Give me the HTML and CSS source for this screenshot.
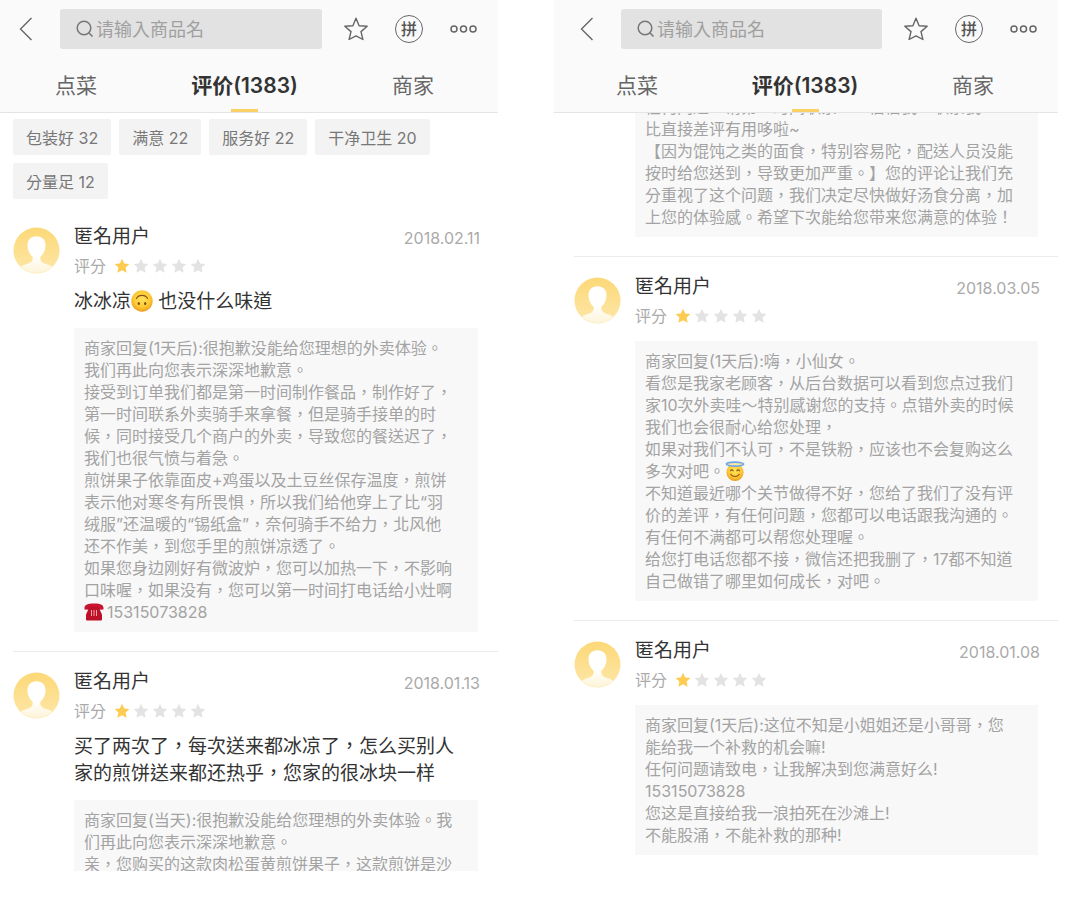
FILE: index.html
```
<!DOCTYPE html>
<html lang="zh-Hant">

<head>
    <meta charset="UTF-8">
    <meta name="viewport" content="width=device-width, initial-scale=1.0">
    <title>评价</title>
    <link rel="stylesheet" href="styles.css">
</head>

<body>
    <!-- shared shapes -->
    <svg class="sprite" aria-hidden="true">
        <defs>
            <linearGradient id="avatar-bg" x1="0" y1="0" x2="0" y2="1">
                <stop offset="0" stop-color="#fcd877" />
                <stop offset="1" stop-color="#fde7a8" />
            </linearGradient>
            <linearGradient id="avatar-body" x1="0" y1="0" x2="0" y2="1">
                <stop offset="0.5" stop-color="#ffffff" />
                <stop offset="1" stop-color="#fdf3d6" />
            </linearGradient>
            <radialGradient id="face" cx="0.5" cy="0.4" r="0.6">
                <stop offset="0" stop-color="#ffe45c" />
                <stop offset="0.65" stop-color="#fdc935" />
                <stop offset="1" stop-color="#ee9a1c" />
            </radialGradient>
            <clipPath id="avatar-clip">
                <circle cx="24" cy="24" r="23" />
            </clipPath>
        </defs>
        <symbol id="back" viewBox="0 0 14 24">
            <path d="M12.5 1L1.5 12L12.5 23" fill="none" stroke="#666" stroke-width="1.4" />
        </symbol>
        <symbol id="search" viewBox="0 0 18 18">
            <circle cx="8" cy="8" r="6.8" fill="none" stroke="#777" stroke-width="1.5" />
            <path d="M12.8 12.8L16.5 16.5" stroke="#777" stroke-width="1.6" />
        </symbol>
        <symbol id="favorite" viewBox="0 0 24 24">
            <path d="M12 1.2L15.1 8.7L23.2 9.3L17 14.6L18.9 22.5L12 18.9L5.1 22.5L7 14.6L0.8 9.3L8.9 8.7Z" fill="none" stroke="#666" stroke-width="1.4" stroke-linejoin="round" />
        </symbol>
        <symbol id="more" viewBox="0 0 27 8">
            <g fill="none" stroke="#666" stroke-width="1.5">
                <circle cx="4" cy="4" r="3" />
                <circle cx="13.5" cy="4" r="3" />
                <circle cx="23" cy="4" r="3" />
            </g>
        </symbol>
        <symbol id="star" viewBox="0 0 16 16">
            <path d="M8 0.8L10.2 5.5L15.4 6.1L11.6 9.6L12.6 14.8L8 12.3L3.4 14.8L4.4 9.6L0.6 6.1L5.8 5.5Z" fill="currentColor" />
        </symbol>
        <symbol id="avatar" viewBox="0 0 48 48">
            <circle cx="24" cy="24" r="23.5" fill="url(#avatar-bg)" />
            <path clip-path="url(#avatar-clip)" d="M24 9.5C18 9.5 14.5 13.5 14.8 19.5C15 24 17 28 20 30.5C20.5 34 19.5 36 15 37.5C10.5 38.8 7.5 40 5 44L10 48H38L43 44C40.5 40 37.5 38.8 33 37.5C28.5 36 27.5 34 28 30.5C31 28 33 24 33.2 19.5C33.5 13.5 30 9.5 24 9.5Z" fill="url(#avatar-body)" />
        </symbol>
        <symbol id="upside-down" viewBox="0 0 22 22">
            <circle cx="11" cy="11" r="10.7" fill="url(#face)" />
            <path d="M5.5 8.5C7.5 4.3 14.5 4.3 16.5 8.5" fill="none" stroke="#8a5210" stroke-width="1.1" stroke-linecap="round" />
            <ellipse cx="7.8" cy="13.5" rx="1.1" ry="1.6" fill="#7a450c" />
            <ellipse cx="14.2" cy="13.5" rx="1.1" ry="1.6" fill="#7a450c" />
        </symbol>
        <symbol id="angel" viewBox="0 0 22 22">
            <circle cx="11" cy="12.5" r="9.4" fill="url(#face)" />
            <ellipse cx="11" cy="3.4" rx="9.5" ry="2.2" fill="#fbe7a0" stroke="#6fa6e8" stroke-width="1.8" />
            <path d="M6 10.8C6.8 9.4 8.2 9.4 9 10.8M13 10.8C13.8 9.4 15.2 9.4 16 10.8M6.3 14.5C8.5 18 13.5 18 15.7 14.5" fill="none" stroke="#8a5210" stroke-width="1.2" stroke-linecap="round" />
        </symbol>
        <symbol id="telephone" viewBox="0 0 20 18">
            <path d="M0.5 6.5C0 2 3 0.6 10 0.6S20 2 19.5 6.5L14.5 6.8L14 4.5H6L5.500 6.8Z" fill="#c8142c" />
            <path d="M5.5 4H14.500L18 11.500V16.500Q18 17.500 17 17.500H3Q2 17.500 2 16.500V11.500Z" fill="#bd1029" />
            <path d="M7.5 7V13M10 7V13M12.5 7V13" stroke="#f3a6a6" stroke-width="1" />
        </symbol>
    </svg>

    <main class="phone">
        <header class="header">
            <div class="toolbar">
                <button class="back" aria-label="返回"><svg width="14" height="24"><use href="#back" /></svg></button>
                <label class="search">
                    <svg width="18" height="18"><use href="#search" /></svg>
                    <input type="search" placeholder="请输入商品名" aria-label="请输入商品名">
                </label>
                <div class="actions">
                    <button aria-label="收藏"><svg width="24" height="24"><use href="#favorite" /></svg></button>
                    <button class="group-buy">拼</button>
                    <button aria-label="更多"><svg width="27" height="8"><use href="#more" /></svg></button>
                </div>
            </div>
            <nav class="tabs">
                <button class="tab">点菜</button>
                <button class="tab active">评价(1383)</button>
                <button class="tab">商家</button>
            </nav>
        </header>

        <section class="content">
            <div class="tags">
                <button class="tag">包装好 32</button>
                <button class="tag">满意 22</button>
                <button class="tag">服务好 22</button>
                <button class="tag">干净卫生 20</button>
                <button class="tag">分量足 12</button>
            </div>

            <article class="review">
                <svg class="avatar"><use href="#avatar" /></svg>
                <div class="review-body">
                    <div class="review-head">
                        <h2 class="user">匿名用户</h2>
                        <time class="date">2018.02.11</time>
                    </div>
                    <div class="rating">
                        <span>评分</span>
                        <div class="stars" role="img" aria-label="1">
                            <svg class="on"><use href="#star" /></svg>
                            <svg><use href="#star" /></svg>
                            <svg><use href="#star" /></svg>
                            <svg><use href="#star" /></svg>
                            <svg><use href="#star" /></svg>
                        </div>
                    </div>
                    <p class="comment">冰冰凉<svg class="emoji"><use href="#upside-down" /></svg> 也没什么味道</p>
                    <p class="reply">
                        商家回复(1天后):很抱歉没能给您理想的外卖体验。<br>
                        我们再此向您表示深深地歉意。<br>
                        接受到订单我们都是第一时间制作餐品，制作好了，<br>
                        第一时间联系外卖骑手来拿餐，但是骑手接单的时<br>
                        候，同时接受几个商户的外卖，导致您的餐送迟了，<br>
                        我们也很气愤与着急。<br>
                        煎饼果子依靠面皮+鸡蛋以及土豆丝保存温度，煎饼<br>
                        表示他对寒冬有所畏惧，所以我们给他穿上了比“羽<br>
                        绒服”还温暖的“锡纸盒”，奈何骑手不给力，北风他<br>
                        还不作美，到您手里的煎饼凉透了。<br>
                        如果您身边刚好有微波炉，您可以加热一下，不影响<br>
                        口味喔，如果没有，您可以第一时间打电话给小灶啊<br>
                        <svg class="emoji small"><use href="#telephone" /></svg>15315073828
                    </p>
                </div>
            </article>

            <article class="review">
                <svg class="avatar"><use href="#avatar" /></svg>
                <div class="review-body">
                    <div class="review-head">
                        <h2 class="user">匿名用户</h2>
                        <time class="date">2018.01.13</time>
                    </div>
                    <div class="rating">
                        <span>评分</span>
                        <div class="stars" role="img" aria-label="1">
                            <svg class="on"><use href="#star" /></svg>
                            <svg><use href="#star" /></svg>
                            <svg><use href="#star" /></svg>
                            <svg><use href="#star" /></svg>
                            <svg><use href="#star" /></svg>
                        </div>
                    </div>
                    <p class="comment">买了两次了，每次送来都冰凉了，怎么买别人<br>家的煎饼送来都还热乎，您家的很冰块一样</p>
                    <p class="reply">
                        商家回复(当天):很抱歉没能给您理想的外卖体验。我<br>
                        们再此向您表示深深地歉意。<br>
                        亲，您购买的这款肉松蛋黄煎饼果子，这款煎饼是沙
                    </p>
                </div>
            </article>
        </section>
    </main>

    <main class="phone wide">
        <header class="header">
            <div class="toolbar">
                <button class="back" aria-label="返回"><svg width="14" height="24"><use href="#back" /></svg></button>
                <label class="search">
                    <svg width="18" height="18"><use href="#search" /></svg>
                    <input type="search" placeholder="请输入商品名" aria-label="请输入商品名">
                </label>
                <div class="actions">
                    <button aria-label="收藏"><svg width="24" height="24"><use href="#favorite" /></svg></button>
                    <button class="group-buy">拼</button>
                    <button aria-label="更多"><svg width="27" height="8"><use href="#more" /></svg></button>
                </div>
            </div>
            <nav class="tabs">
                <button class="tab">点菜</button>
                <button class="tab active">评价(1383)</button>
                <button class="tab">商家</button>
            </nav>
        </header>

        <section class="content">
            <article class="review scrolled">
                <div class="review-body">
                    <p class="reply">
                        任何问题，请第一时间联系——信信我，联系我<br>
                        比直接差评有用哆啦~<br>
                        【因为馄饨之类的面食，特别容易陀，配送人员没能<br>
                        按时给您送到，导致更加严重。】您的评论让我们充<br>
                        分重视了这个问题，我们决定尽快做好汤食分离，加<br>
                        上您的体验感。希望下次能给您带来您满意的体验！
                    </p>
                </div>
            </article>

            <article class="review">
                <svg class="avatar"><use href="#avatar" /></svg>
                <div class="review-body">
                    <div class="review-head">
                        <h2 class="user">匿名用户</h2>
                        <time class="date">2018.03.05</time>
                    </div>
                    <div class="rating">
                        <span>评分</span>
                        <div class="stars" role="img" aria-label="1">
                            <svg class="on"><use href="#star" /></svg>
                            <svg><use href="#star" /></svg>
                            <svg><use href="#star" /></svg>
                            <svg><use href="#star" /></svg>
                            <svg><use href="#star" /></svg>
                        </div>
                    </div>
                    <p class="reply">
                        商家回复(1天后):嗨，小仙女。<br>
                        看您是我家老顾客，从后台数据可以看到您点过我们<br>
                        家10次外卖哇～特别感谢您的支持。点错外卖的时候<br>
                        我们也会很耐心给您处理，<br>
                        如果对我们不认可，不是铁粉，应该也不会复购这么<br>
                        多次对吧。<svg class="emoji small"><use href="#angel" /></svg><br>
                        不知道最近哪个关节做得不好，您给了我们了没有评<br>
                        价的差评，有任何问题，您都可以电话跟我沟通的。<br>
                        有任何不满都可以帮您处理喔。<br>
                        给您打电话您都不接，微信还把我删了，17都不知道<br>
                        自己做错了哪里如何成长，对吧。
                    </p>
                </div>
            </article>

            <article class="review last">
                <svg class="avatar"><use href="#avatar" /></svg>
                <div class="review-body">
                    <div class="review-head">
                        <h2 class="user">匿名用户</h2>
                        <time class="date">2018.01.08</time>
                    </div>
                    <div class="rating">
                        <span>评分</span>
                        <div class="stars" role="img" aria-label="1">
                            <svg class="on"><use href="#star" /></svg>
                            <svg><use href="#star" /></svg>
                            <svg><use href="#star" /></svg>
                            <svg><use href="#star" /></svg>
                            <svg><use href="#star" /></svg>
                        </div>
                    </div>
                    <p class="reply">
                        商家回复(1天后):这位不知是小姐姐还是小哥哥，您<br>
                        能给我一个补救的机会嘛!<br>
                        任何问题请致电，让我解决到您满意好么!<br>
                        15315073828<br>
                        您这是直接给我一浪拍死在沙滩上!<br>
                        不能股涌，不能补救的那种!
                    </p>
                </div>
            </article>
        </section>
    </main>
</body>

</html>
```
FILE: styles.css
```
* {
    box-sizing: border-box;
}

body {
    margin: 0;
    padding: 0 22px 26px 0;
    height: 100vh;
    display: grid;
    grid-template-columns: 498fr 504fr;
    grid-template-rows: 100%;
    gap: 56px;
    background-color: #fff;
    color: #333;
    font-family: Inter, "Noto Sans CJK TC", sans-serif;
    font-size: 16px;
}

h2,
p {
    margin: 0;
    font-weight: 400;
}

button {
    padding: 0;
    border: none;
    background: none;
    color: inherit;
    font: inherit;
    cursor: pointer;
}

.sprite {
    position: absolute;
    width: 0;
    height: 0;
}

.phone {
    min-width: 0;
    overflow: hidden;
    display: flex;
    flex-direction: column;
}

/* header */
.header {
    background-color: #fafafa;
    border-bottom: 1px solid #e4e4e4;
}

.wide .header {
    padding-left: 7px;
}

.toolbar {
    display: flex;
    align-items: center;
    padding: 9px 21px 0 19px;
}

.back {
    width: 41px;
    text-align: left;
}

.toolbar svg {
    display: block;
    flex: none;
}

.search {
    flex: 1;
    min-width: 0;
    height: 40px;
    padding: 0 16px;
    display: flex;
    align-items: center;
    gap: 2px;
    background-color: #e2e2e2;
    border-radius: 3px;
}

.search input {
    flex: 1;
    min-width: 0;
    padding: 0;
    border: none;
    outline: none;
    background: none;
    font: inherit;
    font-size: 18px;
}

.search input::placeholder {
    color: #a0a0a0;
}

.actions {
    display: flex;
    align-items: center;
    gap: 27px;
    margin-left: 22px;
}

.group-buy {
    width: 28px;
    height: 28px;
    border: 1px solid #666;
    border-radius: 50%;
    color: #555;
    font-size: 16px;
    font-weight: 500;
    line-height: 24px;
}

.tabs {
    display: flex;
    justify-content: space-between;
    padding: 13px 64px 0 55px;
}

.tab {
    color: #666;
    font-size: 21px;
    line-height: 47px;
}

.tab::after {
    content: "";
    display: block;
    width: 27px;
    height: 3px;
    margin: 0 auto;
}

.tab.active {
    color: #333;
    font-weight: 600;
}

.tab.active::after {
    background-color: #fbd065;
}

/* list */
.content {
    flex: 1;
    min-height: 0;
    overflow: hidden;
    padding-left: 13px;
}

.wide .content {
    padding-left: 20px;
}

.tags {
    display: flex;
    flex-wrap: wrap;
    gap: 8px;
    padding: 6px 20px 8px 0;
}

.tag {
    height: 36px;
    padding: 0 13px;
    background-color: #f3f3f3;
    border-radius: 2px;
    color: #777;
}

.review {
    display: flex;
    align-items: flex-start;
    padding: 17px 20px 19px 0;
    border-bottom: 1px solid #ececec;
}

.review.last {
    border-bottom: none;
}

.avatar {
    flex: none;
    width: 47px;
    height: 47px;
    margin-top: 3px;
}

.review-body {
    flex: 1;
    min-width: 0;
    margin-left: 14px;
}

.review-head {
    display: flex;
    justify-content: space-between;
    align-items: flex-end;
    height: 26px;
    line-height: 26px;
}

.user {
    font-size: 19px;
}

.date {
    margin-right: -2px;
    color: #aaa;
    line-height: 24px;
}

.rating {
    display: flex;
    align-items: center;
    gap: 8px;
    margin-top: 4px;
    color: #aaa;
    line-height: 24px;
}

.stars {
    display: flex;
    gap: 3px;
}

.stars svg {
    width: 16px;
    height: 16px;
    color: #e3e3e3;
}

.stars .on {
    color: #fdcb52;
}

.comment {
    margin-top: 10px;
    font-size: 19px;
    line-height: 27px;
    white-space: nowrap;
}

.reply {
    margin-top: 13px;
    padding: 9px 10px;
    background-color: #f8f8f8;
    color: #a3a3a3;
    line-height: 22px;
    white-space: nowrap;
}

.emoji {
    width: 22px;
    height: 22px;
    vertical-align: middle;
    margin-top: -6px;
    margin-bottom: -2px;
}

.emoji.small {
    width: 20px;
    height: 20px;
    margin-right: 3px;
}

/* the first reply is partly scrolled under the header */
.scrolled {
    margin-top: -56px;
}

.scrolled .review-body {
    margin-left: 61px;
}
```
